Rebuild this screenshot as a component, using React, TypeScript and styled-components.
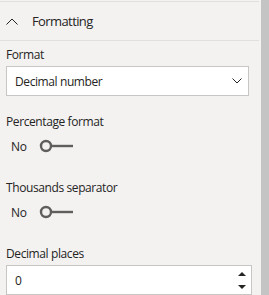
import styled, { createGlobalStyle } from 'styled-components';

const GlobalStyle = createGlobalStyle`
  html, body {
    margin: 0;
    padding: 0;
    background: #f3f2f1;
  }
  body {
    font-family: "Open Sans", "Noto Sans", sans-serif;
    color: #252423;
  }
`;

const Page = styled.div`
  display: flex;
  width: 269px;
  height: 295px;
  overflow: hidden;
  background: #f3f2f1;
`;

const Panel = styled.div`
  width: 259px;
  padding-top: 1px;
  display: flex;
  flex-direction: column;
`;

const ScrollTrack = styled.div`
  width: 8px;
  margin-left: 2px;
  background: #c4c4c4;
`;

const Header = styled.div`
  display: flex;
  align-items: center;
  height: 40px;
  border-top: 1px solid #e1dfdd;
  border-bottom: 1px solid #e1dfdd;
  padding-left: 6px;
  gap: 14px;
  font-size: 13px;
  letter-spacing: -0.6px;
  color: #252423;
`;

const Body = styled.div`
  display: flex;
  flex-direction: column;
  padding: 6px 0 0 6px;
  font-size: 12px;
  letter-spacing: -0.4px;
`;

const Label = styled.div<{ $gap?: number }>`
  line-height: 16px;
  color: #252423;
  margin-top: ${(p) => p.$gap ?? 0}px;
`;

const Field = styled.div<{ $width: number }>`
  display: flex;
  align-items: center;
  justify-content: space-between;
  box-sizing: border-box;
  width: ${(p) => p.$width}px;
  height: 30px;
  margin-top: 3px;
  padding: 0 6px 0 8px;
  background: #fff;
  border: 1px solid #c8c6c4;
  color: #252423;
`;

const ToggleRow = styled.div`
  display: flex;
  align-items: center;
  height: 20px;
  margin-top: 6px;
  padding-left: 5px;
  gap: 13px;
  color: #252423;
`;

const Spinner = styled.div`
  display: flex;
  flex-direction: column;
  gap: 9px;
  margin-right: -1px;
`;

function Toggle({ label }: { label: string }) {
  return (
    <ToggleRow>
      <span>{label}</span>
      <svg width="34" height="14" viewBox="0 0 34 14">
        <circle cx="7" cy="7" r="5" fill="none" stroke="#605e5c" strokeWidth="2.4" />
        <line x1="12" y1="7" x2="34" y2="7" stroke="#605e5c" strokeWidth="2.4" />
      </svg>
    </ToggleRow>
  );
}

export default function App() {
  return (
    <Page>
      <GlobalStyle />
      <Panel>
        <Header>
          <svg width="12" height="7" viewBox="0 0 12 7">
            <polyline points="0.5,6.5 6,1 11.5,6.5" fill="none" stroke="#252423" strokeWidth="1" />
          </svg>
          <span>Formatting</span>
        </Header>
        <Body>
          <Label>Format</Label>
          <Field $width={243}>
            <span>Decimal number</span>
            <svg width="10" height="6" viewBox="0 0 10 6">
              <polyline points="0.5,0.5 5,5 9.5,0.5" fill="none" stroke="#252423" strokeWidth="1" />
            </svg>
          </Field>
          <Label $gap={18}>Percentage format</Label>
          <Toggle label="No" />
          <Label $gap={24}>Thousands separator</Label>
          <Toggle label="No" />
          <Label $gap={24}>Decimal places</Label>
          <Field $width={246}>
            <span>0</span>
            <Spinner>
              <svg width="8" height="4" viewBox="0 0 8 4">
                <polygon points="0,4 4,0 8,4" fill="#252423" />
              </svg>
              <svg width="8" height="4" viewBox="0 0 8 4">
                <polygon points="0,0 8,0 4,4" fill="#252423" />
              </svg>
            </Spinner>
          </Field>
        </Body>
      </Panel>
      <ScrollTrack />
    </Page>
  );
}
